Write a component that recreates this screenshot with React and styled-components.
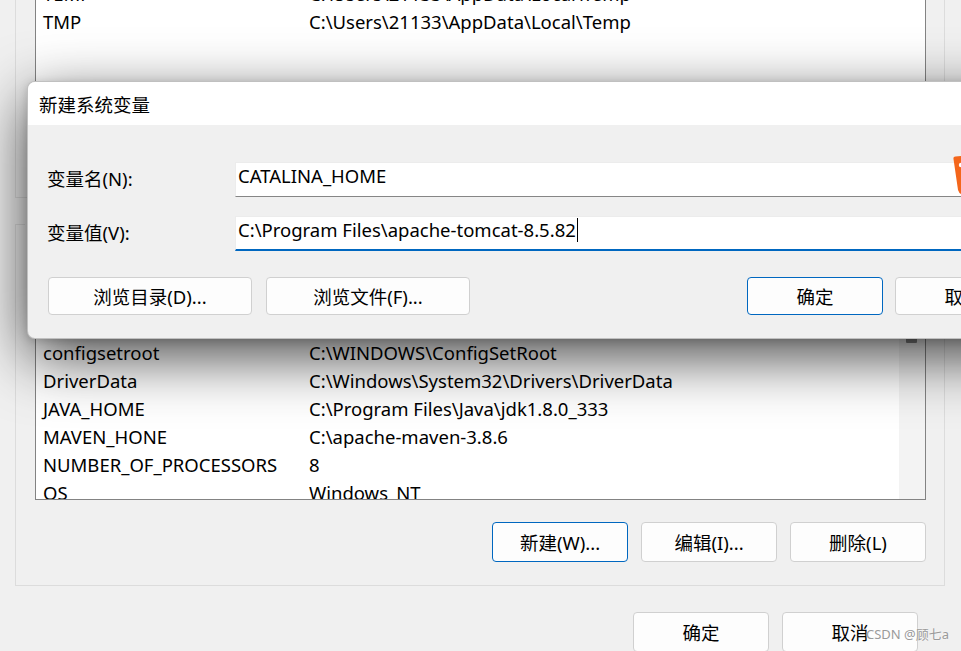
import styled, { createGlobalStyle } from 'styled-components';

const GlobalStyle = createGlobalStyle`
  html, body {
    margin: 0;
    padding: 0;
  }
  body {
    background: #f0f0f0;
    overflow: hidden;
    color: #000;
    font-family: "Noto Sans", "Noto Sans CJK SC", sans-serif;
  }
`;

const Screen = styled.div`
  position: relative;
  width: 961px;
  height: 651px;
  overflow: hidden;
  background: #f0f0f0;
  font-size: 18.5px;
`;

/* ---------- the environment variables window behind ---------- */

const MainWindow = styled.div`
  display: flex;
  flex-direction: column;
  width: 930px;
  margin-left: 15px;
`;

const GroupBox = styled.div`
  display: flex;
  flex-direction: column;
  border: 1px solid #dcdcdc;
  margin-top: ${(p) => p.$top}px;
  padding: ${(p) => p.$padTop}px 18px ${(p) => p.$padBottom}px 19px;
`;

const Caption = styled.div`
  width: fit-content;
  margin: -13px 0 0 -10px;
  padding: 0 2px;
  line-height: 24px;
  background: #f0f0f0;
`;

const ListBox = styled.div`
  display: flex;
  height: ${(p) => p.$height}px;
  margin-top: ${(p) => p.$top || 0}px;
  box-sizing: border-box;
  border: 1px solid #838383;
  background: #fff;
  overflow: hidden;
`;

const Rows = styled.div`
  flex: 1;
  padding: ${(p) => p.$padTop}px 0 0 7px;
`;

const Row = styled.div`
  display: grid;
  grid-template-columns: 266px 1fr;
  height: 28px;
  line-height: 28px;
  white-space: nowrap;
`;

const Track = styled.div`
  width: 26px;
  background: #f3f3f3;
`;

const Thumb = styled.div`
  width: 11px;
  height: 43px;
  margin: 49px 0 0 7px;
  background: #868686;
  border-radius: 1px;
`;

const ButtonRow = styled.div`
  display: flex;
  justify-content: flex-end;
  gap: 13px;
  margin-top: ${(p) => p.$top}px;
  padding-right: ${(p) => p.$right || 0}px;
`;

const Button = styled.div`
  display: flex;
  align-items: center;
  justify-content: center;
  box-sizing: border-box;
  width: ${(p) => p.$width || 136}px;
  height: ${(p) => p.$height || 40}px;
  border: 1px solid ${(p) => (p.$primary ? '#0067c0' : '#d0d0d0')};
  border-radius: 4px;
  background: #fdfdfd;
  white-space: nowrap;
`;

/* ---------- the new system variable dialog ---------- */

const Dialog = styled.div`
  position: absolute;
  left: 27px;
  top: 81px;
  width: 1025px;
  height: 258px;
  box-sizing: border-box;
  display: flex;
  flex-direction: column;
  border: 1px solid rgba(0, 0, 0, 0.2);
  border-radius: 8px;
  overflow: hidden;
  background: #f0f0f0;
  box-shadow: 0 18px 60px rgba(0, 0, 0, 0.72), 0 2px 8px rgba(0, 0, 0, 0.15);
`;

const TitleBar = styled.div`
  display: flex;
  align-items: center;
  height: 43px;
  padding-left: 11px;
  background: #fff;
`;

const DialogBody = styled.div`
  display: flex;
  flex-direction: column;
  padding: 37px 20px 0 19px;
`;

const Form = styled.div`
  display: grid;
  grid-template-columns: 188px 1fr;
  row-gap: 19px;
  align-items: center;
`;

const Label = styled.div`
  padding-bottom: 3px;
  white-space: nowrap;
`;

const TextBox = styled.div`
  display: flex;
  align-items: flex-start;
  box-sizing: border-box;
  height: 35px;
  padding-left: 2px;
  line-height: 26px;
  background: #fff;
  border: 1px solid #ececec;
  border-bottom: ${(p) => (p.$focused ? '2px solid #0067c0' : '1px solid #868686')};
  white-space: nowrap;
`;

const Caret = styled.span`
  display: inline-block;
  width: 1px;
  height: 24px;
  margin: 1px 0 0 1px;
  background: #000;
`;

const DialogButtons = styled.div`
  display: flex;
  justify-content: space-between;
  margin-top: 26px;
  padding-left: 1px;
`;

const ButtonGroup = styled.div`
  display: flex;
  gap: ${(p) => p.$gap}px;
`;

const OrangeTag = styled.svg`
  position: absolute;
  left: 952px;
  top: 156px;
`;

const Watermark = styled.div`
  position: absolute;
  left: 866px;
  top: 624px;
  font-size: 13px;
  color: #9a9a9a;
  text-shadow: 0 0 2px #fff;
  white-space: nowrap;
`;

const userVars = [
  ['TEMP', 'C:\\Users\\21133\\AppData\\Local\\Temp'],
  ['TMP', 'C:\\Users\\21133\\AppData\\Local\\Temp'],
];

const systemVars = [
  ['变量', '值'],
  ['ComSpec', 'C:\\WINDOWS\\system32\\cmd.exe'],
  ['CLASSPATH', '.;%JAVA_HOME%\\lib'],
  ['configsetroot', 'C:\\WINDOWS\\ConfigSetRoot'],
  ['DriverData', 'C:\\Windows\\System32\\Drivers\\DriverData'],
  ['JAVA_HOME', 'C:\\Program Files\\Java\\jdk1.8.0_333'],
  ['MAVEN_HONE', 'C:\\apache-maven-3.8.6'],
  ['NUMBER_OF_PROCESSORS', '8'],
  ['OS', 'Windows_NT'],
];

export default function App() {
  return (
    <Screen>
      <GlobalStyle />
      <MainWindow>
        <GroupBox $top={-60} $padTop={29} $padBottom={27}>
          <ListBox $height={200}>
            <Rows $padTop={9}>
              {userVars.map(([name, value]) => (
                <Row key={name}>
                  <span>{name}</span>
                  <span>{value}</span>
                </Row>
              ))}
            </Rows>
          </ListBox>
        </GroupBox>

        <GroupBox $top={26} $padTop={0} $padBottom={23}>
          <Caption>系统变量(S)</Caption>
          <ListBox $height={250} $top={14}>
            <Rows $padTop={4}>
              {systemVars.map(([name, value]) => (
                <Row key={name}>
                  <span>{name}</span>
                  <span>{value}</span>
                </Row>
              ))}
            </Rows>
            <Track>
              <Thumb />
            </Track>
          </ListBox>
          <ButtonRow $top={22}>
            <Button $primary>新建(W)...</Button>
            <Button>编辑(I)...</Button>
            <Button>删除(L)</Button>
          </ButtonRow>
        </GroupBox>

        <ButtonRow $top={26} $right={27}>
          <Button>确定</Button>
          <Button>取消</Button>
        </ButtonRow>
      </MainWindow>

      <Dialog>
        <TitleBar>新建系统变量</TitleBar>
        <DialogBody>
          <Form>
            <Label>变量名(N):</Label>
            <TextBox>CATALINA_HOME</TextBox>
            <Label>变量值(V):</Label>
            <TextBox $focused>
              C:\Program Files\apache-tomcat-8.5.82
              <Caret />
            </TextBox>
          </Form>
          <DialogButtons>
            <ButtonGroup $gap={14}>
              <Button $width={204} $height={38}>浏览目录(D)...</Button>
              <Button $width={204} $height={38}>浏览文件(F)...</Button>
            </ButtonGroup>
            <ButtonGroup $gap={12}>
              <Button $width={136} $height={38} $primary>确定</Button>
              <Button $width={136} $height={38}>取消</Button>
            </ButtonGroup>
          </DialogButtons>
        </DialogBody>
      </Dialog>

      <OrangeTag width="9" height="38" viewBox="0 0 9 38">
        <path d="M1.5 3 Q1 1 3.5 0.6 L9 0 L9 38 Q7 37 6 34 Z" fill="#f4661b" />
        <circle cx="9" cy="9" r="2.2" fill="#fff" />
      </OrangeTag>

      <Watermark>CSDN @顾七a</Watermark>
    </Screen>
  );
}
